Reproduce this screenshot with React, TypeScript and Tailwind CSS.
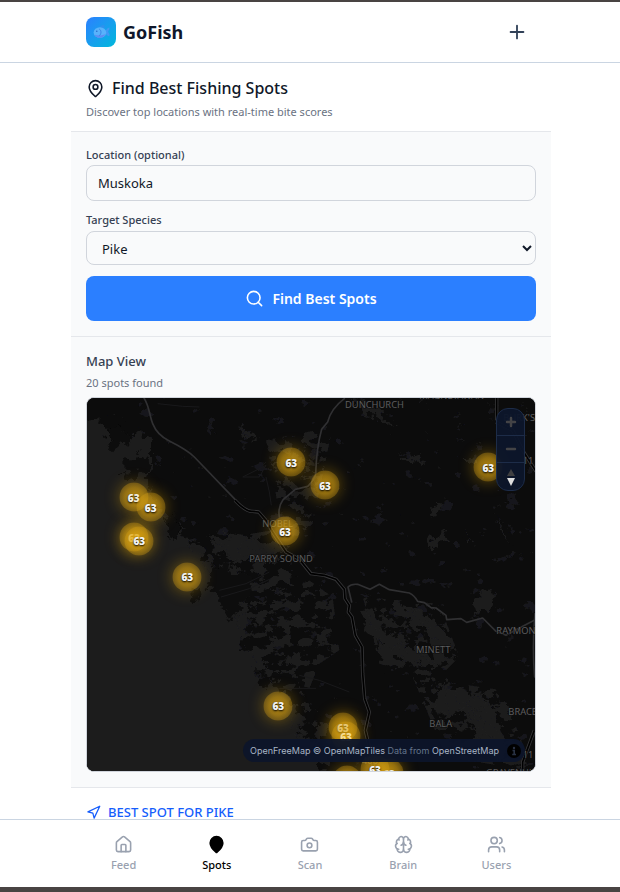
import React from "react";
import { Brain, Camera, House, MapPin, Navigation, Plus, Search, Users } from "lucide-react";

const spots = [
  { x: 204.3, y: 64.2 },
  { x: 238, y: 87.2 },
  { x: 401.3, y: 69.2 },
  { x: 46.7, y: 99.3 },
  { x: 63.7, y: 109.3 },
  { x: 47, y: 139, faint: true },
  { x: 52.3, y: 142.7 },
  { x: 100.3, y: 178.7 },
  { x: 198, y: 133 },
  { x: 191.3, y: 308 },
  { x: 256, y: 329 },
  { x: 259, y: 338, faint: true },
  { x: 260, y: 382, faint: true },
  { x: 302, y: 375 },
  { x: 288, y: 371 },
];

const tabs = [
  { name: "Feed", icon: House },
  { name: "Spots", icon: MapPin, active: true },
  { name: "Scan", icon: Camera },
  { name: "Brain", icon: Brain },
  { name: "Users", icon: Users },
];

const highway =
  "M447 310Q480 345 500 343L518 345L540 370L560 405L600 465L640 487L675 530L715 535L750 547L775 577L777 605L790 625L787 645L798 660L808 715L828 750L830 830L836 905L850 945L838 1000L850 1050L865 1122M1232 0V70M1230 75L1280 100L1310 160L1350 223M1345 1000L1310 1095V1122";

function FishLogo() {
  return (
    <span className="flex size-[30px] items-center justify-center rounded-lg bg-linear-to-br from-[#2b7fff] to-[#00b8db]">
      <svg viewBox="0 0 54 48" className="w-[17px]" aria-hidden="true">
        <path d="M21 12C24 4 33 1 38 5C34 6 35 10 38 13Z" fill="#2f91ee" />
        <path d="M38 23C43 19 45 12 52 11C54 17 49 20 48 25C50 30 55 33 51 39C45 38 43 32 38 30Z" fill="#4198f5" />
        <ellipse cx="22" cy="27" rx="20" ry="17" fill="#59b2fb" />
        <path d="M4 34C13 49 34 46 41 31C34 36 21 37 4 34Z" fill="#5f8df2" />
        <path d="M20 16C28 21 26 33 20 37" fill="none" stroke="#347fe6" strokeWidth="3" />
        <circle cx="12" cy="23" r="2.5" fill="#276ac8" />
      </svg>
    </span>
  );
}

function Terrain() {
  return (
    <svg viewBox="3 3 1344 1119" preserveAspectRatio="xMidYMid slice" className="block h-full w-full" aria-hidden="true">
      <defs>
        <filter id="shore" x="-10%" y="-10%" width="120%" height="120%">
          <feTurbulence type="fractalNoise" baseFrequency="0.035" numOctaves="4" seed="7" />
          <feDisplacementMap in="SourceGraphic" scale="60" xChannelSelector="R" yChannelSelector="G" />
        </filter>
        <filter id="lakes" x="0" y="0" width="100%" height="100%">
          <feTurbulence type="fractalNoise" baseFrequency="0.026 0.036" numOctaves="5" seed="12" />
          <feColorMatrix values="0 0 0 0 0  0 0 0 0 0  0 0 0 0 0  24 0 0 0 -12.4" />
          <feComposite in="SourceGraphic" operator="in" />
        </filter>
        <filter id="ponds" x="0" y="0" width="100%" height="100%">
          <feTurbulence type="fractalNoise" baseFrequency="0.02 0.026" numOctaves="5" seed="31" />
          <feColorMatrix values="0 0 0 0 0  0 0 0 0 0  0 0 0 0 0  24 0 0 0 -16.6" />
          <feComposite in="SourceGraphic" operator="in" />
        </filter>
      </defs>
      <rect width="1350" height="1125" fill="#0c0c0c" />
      <rect width="1350" height="1125" fill="#17171a" filter="url(#ponds)" />
      <g fill="#1b1b1d" filter="url(#shore)">
        <path d="M-40 60L40 65L55 100L75 150L110 130L150 110L195 130L195 200L185 260L205 320L240 350L240 400L270 430L285 390L330 450L370 465L340 490L390 520L370 560L400 610L425 650L450 620L490 640L480 690L460 750L510 770L550 820L500 820L520 860L600 880L630 970L660 1010L690 1050L720 1160L-40 1160Z" />
        <path d="M370 430L430 410L500 420L580 450L570 490L500 480L460 500L390 460Z" />
        <path d="M840 630L870 660L890 700L960 740L1050 790L1030 810L960 790L900 760L860 730L830 670Z" />
        <path d="M950 630L1000 640L1050 680L1080 720L1110 770L1050 740L1010 700L960 650Z" />
        <path d="M1160 610L1190 585L1230 590L1225 630L1190 650L1155 635Z" />
        <path d="M1010 890L1050 910L1070 860L1120 870L1170 900L1230 930L1240 1000L1270 1060L1230 1090L1180 1040L1160 980L1110 940L1070 960L1040 950Z" />
        <path d="M800 10L840 25L900 60L940 90L890 75L830 40Z" />
        <path d="M1040 315L1055 330L1050 370L1035 350Z" />
        <path d="M1020 430L1080 410L1090 435L1050 445L1030 455Z" />
        <path d="M1125 390L1145 420L1170 440L1145 430Z" />
        <path d="M1225 360L1250 410L1290 450L1270 430Z" />
        <path d="M460 90L500 110L520 130L480 115ZM940 180L1000 170L1010 195L950 190ZM1140 175L1170 190L1155 215Z" />
      </g>
      <path
        d="M450 540L600 500L740 600L760 760L700 800L660 900L560 860L470 740L440 640ZM560 920L660 900L740 1000L730 1122L660 1060ZM980 840L1250 880L1340 1122L1080 1080ZM830 600L1060 620L1120 780L1040 860L880 800ZM540 130L740 90L680 380L600 460ZM300 440L560 400L590 500L400 560Z"
        fill="#1b1b1d"
        filter="url(#lakes)"
      />
      <g fill="#0c0c0c" filter="url(#shore)">
        <path d="M390 510L480 520L510 570L450 650L425 670L400 610L370 560Z" />
        <path d="M110 190L180 175L185 210L150 250L110 225ZM320 575L350 580L345 610L320 605ZM60 95L120 90L130 130L75 160ZM235 355L260 350L275 400L250 430Z" />
      </g>
      <g fill="none" stroke="#19191b" strokeWidth="3">
        <path d="M400 580L480 560L550 525M405 600L490 575L555 545M470 240L540 205L520 240ZM540 240L550 285L556 325M640 835L700 850L790 885M580 874H690M215 20L290 28L340 30" />
      </g>
      <g fill="none" stroke="#303032" strokeWidth="5" strokeLinejoin="round" strokeLinecap="round">
        <path d="M172 0C190 25 190 55 200 80C210 105 225 120 250 132C290 152 310 165 325 180L450 310" />
        <path d="M775 5Q735 35 725 75L707 97Q692 150 689 230Q685 250 665 268L628 277L592 307Q575 330 580 360" />
        <path d="M797 615L786 570Q795 560 815 562L852 577L880 562L910 578L970 588Q985 595 995 613L1015 617L1035 632L1050 633L1080 655L1082 668L1125 665L1142 676L1190 663L1230 703L1260 715L1300 693L1345 670" />
        <path d="M1347 650Q1338 750 1346 840" />
      </g>
      <g fill="none" strokeLinejoin="round">
        <path d={highway} stroke="#363638" strokeWidth="10" />
        <path d={highway} stroke="#000" strokeWidth="5" />
      </g>
      <g fill="#5c5c5e" stroke="#0c0c0c" strokeWidth="3" paintOrder="stroke" fontSize="28" className="font-['Noto_Sans',sans-serif]">
        <text x="777" y="34">DUNCHURCH</text>
        <text x="1000" y="5">MAGNETAWAN</text>
        <text x="1252" y="73">BURK'S</text>
        <text x="1310" y="200">11</text>
        <text x="529" y="390">NOBEL</text>
        <text x="490" y="494">PARRY SOUND</text>
        <text x="990" y="769">MINETT</text>
        <text x="1231" y="710">RAYMOND</text>
        <text x="1267" y="953">BRACEBRIDGE</text>
        <text x="1030" y="989">BALA</text>
        <text x="828" y="1102">400</text>
        <text x="1310" y="1084">11</text>
        <text x="1200" y="1136">GRAVENHURST</text>
      </g>
    </svg>
  );
}

function SpotMap() {
  return (
    <div className="relative h-[375px] overflow-hidden rounded-lg border border-[#d1d5dc] bg-[#0c0c0c]">
      <Terrain />
      {spots.map((s) => (
        <button
          key={`${s.x}-${s.y}`}
          type="button"
          style={{ left: `${(s.x / 448) * 100}%`, top: `${(s.y / 373) * 100}%` }}
          className="absolute flex size-[29px] -translate-x-1/2 -translate-y-1/2 items-center justify-center rounded-full bg-[radial-gradient(circle,rgba(222,165,16,0.78),rgba(222,165,16,0.62)_45%,rgba(222,165,16,0.42)_72%)] shadow-[0_0_15px_rgba(240,177,0,0.4)]"
        >
          <span
            className={
              s.faint
                ? "font-['Open_Sans',sans-serif] text-[10px] leading-none font-extrabold text-[#f5dc92]"
                : "font-['Open_Sans',sans-serif] text-[10px] leading-none font-extrabold text-[#f4f4f4] [text-shadow:0_1px_2px_#000]"
            }
          >
            63
          </span>
        </button>
      ))}
      <div className="absolute top-2.5 right-2.5 flex w-[29px] flex-col divide-y divide-[#1d2c48] overflow-hidden rounded-[12px] border border-[#1d2c48] bg-[#0d162b]/95">
        <button type="button" aria-label="Zoom in" className="flex h-[27px] items-center justify-center">
          <svg viewBox="0 0 12 12" className="size-3"><path d="M6 2V10M2 6H10" stroke="#434346" strokeWidth="2.5" strokeLinecap="round" /></svg>
        </button>
        <button type="button" aria-label="Zoom out" className="flex h-[27px] items-center justify-center">
          <svg viewBox="0 0 12 12" className="size-3"><path d="M2 6H10" stroke="#434346" strokeWidth="2.5" strokeLinecap="round" /></svg>
        </button>
        <button type="button" aria-label="Reset north" className="flex h-[27px] items-center justify-center">
          <svg viewBox="0 0 10 20" className="h-5 w-2.5">
            <path d="M5 2L9 9H1Z" fill="#3f3f41" />
            <path d="M5 19L9 11H1Z" fill="#dedede" />
          </svg>
        </button>
      </div>
      <div className="absolute right-2.5 bottom-[9px] flex h-[23px] items-center rounded-[12px] bg-[#0d152a]/95 pr-1 pl-[7px] font-['Inter',sans-serif] text-[9px] whitespace-nowrap text-[#64748b]">
        <span>
          <a href="#openfreemap" className="text-[#a9b5c6]">OpenFreeMap</a>{" "}
          <a href="#openmaptiles" className="text-[#a9b5c6]">© OpenMapTiles</a> Data from{" "}
          <a href="#openstreetmap" className="text-[#a9b5c6]">OpenStreetMap</a>
        </span>
        <button type="button" aria-label="Toggle attribution" className="ml-2 flex size-[14px] items-center justify-center rounded-full bg-black">
          <svg viewBox="0 0 14 14" className="size-[14px]">
            <circle cx="7" cy="4" r="1.2" fill="#293244" />
            <path d="M5.5 6.5H7.2V10.5M5.2 10.5H9" stroke="#293244" strokeWidth="1.6" fill="none" />
          </svg>
        </button>
      </div>
    </div>
  );
}

export default function App() {
  return (
    <div className="flex h-screen flex-col overflow-hidden border-t-2 border-b-5 border-[#494443] bg-white font-['Noto_Sans',sans-serif] text-[#101828]">
      <header className="shrink-0 border-b border-[#cad5e2]">
        <div className="mx-auto flex h-[60px] max-w-[480px] items-center justify-between pr-3.5 pl-4">
          <div className="flex items-center gap-[7px]">
            <FishLogo />
            <span className="text-[18px] leading-6 font-bold text-[#0f172b]">GoFish</span>
          </div>
          <button type="button" aria-label="Add" className="flex size-[38px] items-center justify-center text-[#314158]">
            <Plus size={22} strokeWidth={2} />
          </button>
        </div>
      </header>

      <main className="min-h-0 flex-1 overflow-hidden pl-0.5">
        <div className="mx-auto max-w-[480px]">
          <div className="h-[69px] border-b border-gray-200 px-[15px] pt-[13px]">
            <h1 className="flex items-center gap-[7px] text-[16px] leading-6 font-medium">
              <MapPin size={19} />
              Find Best Fishing Spots
            </h1>
            <p className="mt-1 text-[11px] leading-4 text-[#6a7282]">Discover top locations with real-time bite scores</p>
          </div>

          <form className="border-b border-gray-200 bg-gray-50 p-[15px]" onSubmit={(e) => e.preventDefault()}>
            <label htmlFor="location" className="block pb-0.5 text-[11px] leading-4 font-medium text-[#364153]">
              Location (optional)
            </label>
            <input
              id="location"
              defaultValue="Muskoka"
              className="block h-9 w-full rounded-lg border border-[#d1d5dc] bg-gray-50 px-[11px] text-[13px]"
            />
            <label htmlFor="species" className="mt-[11px] block pb-[3px] text-[11px] leading-4 font-medium text-[#364153]">
              Target Species
            </label>
            <select id="species" className="block h-[34px] w-full rounded-lg border border-[#d1d5dc] bg-gray-50 px-[11px] pt-px text-[13px]">
              <option>Pike</option>
              <option>Bass</option>
              <option>Walleye</option>
            </select>
            <button
              type="submit"
              className="mt-[11px] flex h-[45px] w-full items-center justify-center gap-2 rounded-lg bg-[#2b7fff] text-[14px] font-semibold text-white"
            >
              <Search size={19} />
              Find Best Spots
            </button>
          </form>

          <section className="border-b border-gray-200 bg-gray-50 px-[15px] pt-3.5 pb-[15px]">
            <h2 className="text-[13px] leading-5 font-medium text-[#364153]">Map View</h2>
            <p className="mt-1 mb-1.5 text-[11px] leading-4 text-[#6a7282]">20 spots found</p>
            <SpotMap />
          </section>

          <section className="px-[15px] pt-3.5">
            <h2 className="flex items-center gap-[7px] text-[13px] leading-5 font-medium text-[#155dfc]">
              <Navigation size={15} />
              BEST SPOT FOR PIKE
            </h2>
          </section>
        </div>
      </main>

      <nav className="shrink-0 border-t border-[#cad5e2] bg-white">
        <div className="mx-auto grid h-[67px] max-w-[480px] grid-cols-5 px-[7px]">
          {tabs.map(({ name, icon: Icon, active }) => (
            <a
              key={name}
              href={`#${name.toLowerCase()}`}
              className={
                active
                  ? "flex flex-col items-center justify-center gap-[3px] text-[11px] leading-4 font-medium text-black"
                  : "flex flex-col items-center justify-center gap-[3px] text-[11px] leading-4 font-medium text-[#99a1af]"
              }
            >
              <Icon size={19} fill={active ? "currentColor" : "none"} />
              {name}
            </a>
          ))}
        </div>
      </nav>
    </div>
  );
}
